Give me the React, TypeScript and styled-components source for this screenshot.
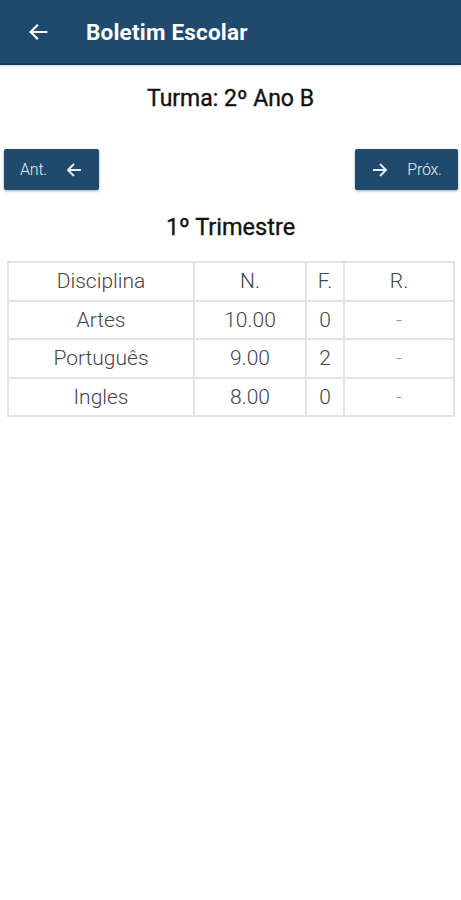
import React from 'react';
import styled, { createGlobalStyle } from 'styled-components';

type Grade = {
  subject: string;
  grade: string;
  absences: string;
  result: string;
};

const grades: Grade[] = [
  { subject: 'Artes', grade: '10.00', absences: '0', result: '-' },
  { subject: 'Português', grade: '9.00', absences: '2', result: '-' },
  { subject: 'Ingles', grade: '8.00', absences: '0', result: '-' },
];

const ArrowLeft = () => (
  <svg width="18" height="18" viewBox="0 0 24 24" fill="none" stroke="currentColor" strokeWidth="2.6" strokeLinecap="square">
    <path d="M20 12H5M11 5l-7 7 7 7" />
  </svg>
);

const ArrowRight = () => (
  <svg width="18" height="18" viewBox="0 0 24 24" fill="none" stroke="currentColor" strokeWidth="2.6" strokeLinecap="square">
    <path d="M4 12h15M13 5l7 7-7 7" />
  </svg>
);

const App = () => {
  return (
    <>
      <GlobalStyle />
      <Page>
        <Header>
          <BackButton>
            <svg width="22" height="22" viewBox="0 0 24 24" fill="none" stroke="currentColor" strokeWidth="2.4" strokeLinecap="square">
              <path d="M21 12H4M11 5l-7 7 7 7" />
            </svg>
          </BackButton>
          <HeaderTitle>Boletim Escolar</HeaderTitle>
        </Header>
        <ClassTitle>Turma: 2º Ano B</ClassTitle>
        <NavRow>
          <NavButton $wide={false}>
            <span>Ant.</span>
            <ArrowLeft />
          </NavButton>
          <NavButton $wide>
            <ArrowRight />
            <span>Próx.</span>
          </NavButton>
        </NavRow>
        <TermTitle>1º Trimestre</TermTitle>
        <Table>
          <Row>
            <Cell>Disciplina</Cell>
            <Cell>N.</Cell>
            <Cell>F.</Cell>
            <Cell>R.</Cell>
          </Row>
          {grades.map((g) => (
            <Row key={g.subject}>
              <Cell>{g.subject}</Cell>
              <Cell>{g.grade}</Cell>
              <Cell>{g.absences}</Cell>
              <Cell $faint>{g.result}</Cell>
            </Row>
          ))}
        </Table>
      </Page>
    </>
  );
};

export default App;

const GlobalStyle = createGlobalStyle`
  body {
    margin: 0;
    background: #ffffff;
    font-family: Roboto, "Noto Sans", sans-serif;
  }
`;

const Page = styled.div`
  min-height: 900px;
  background: #ffffff;
`;

const Header = styled.div`
  height: 63px;
  display: flex;
  align-items: center;
  background-color: #1f4a6d;
  border-bottom: 2px solid #163954;
  box-shadow: 0 1px 2px rgba(0, 0, 0, 0.15);
`;

const BackButton = styled.div`
  width: 86px;
  padding-left: 27px;
  box-sizing: border-box;
  display: flex;
  align-items: center;
  color: #ffffff;
`;

const HeaderTitle = styled.div`
  color: #ffffff;
  font-size: 22.5px;
  font-weight: 700;
  letter-spacing: 0.2px;
`;

const ClassTitle = styled.div`
  margin-top: 19px;
  text-align: center;
  font-size: 23px;
  font-weight: 400;
  color: #111;
  line-height: 30px;
  -webkit-text-stroke: 0.35px #111;
`;

const NavRow = styled.div`
  display: flex;
  justify-content: space-between;
  padding: 0 3px 0 4px;
  margin-top: 35px;
`;

const NavButton = styled.div<{ $wide: boolean }>`
  width: ${(p) => (p.$wide ? '103px' : '95px')};
  height: 41px;
  box-sizing: border-box;
  display: flex;
  align-items: center;
  justify-content: center;
  gap: 18px;
  background-color: #1f4a6d;
  color: #e8eef4;
  border-radius: 2px;
  box-shadow: 0 1px 3px rgba(0, 0, 0, 0.35);
  font-size: 16px;
  font-weight: 300;
  letter-spacing: -0.2px;
`;

const TermTitle = styled.div`
  margin-top: 22px;
  text-align: center;
  font-size: 23.5px;
  font-weight: 400;
  color: #111;
  line-height: 30px;
  -webkit-text-stroke: 0.35px #111;
`;

const Table = styled.div`
  margin: 19px 6px 0 7px;
  border: 2px solid #e3e3e3;
  border-bottom-width: 1px;
`;

const Row = styled.div`
  display: grid;
  grid-template-columns: 184px 112px 38px 1fr;
  height: 36.5px;
  border-bottom: 2px solid #e3e3e3;
  &:last-child {
    border-bottom: 1px solid #e3e3e3;
  }
`;

const Cell = styled.div<{ $faint?: boolean }>`
  display: flex;
  align-items: center;
  justify-content: center;
  font-size: 21px;
  font-weight: 300;
  color: ${(p) => (p.$faint ? '#999' : '#444')};
  border-left: 2px solid #e3e3e3;
  &:first-child {
    border-left: none;
  }
`;
